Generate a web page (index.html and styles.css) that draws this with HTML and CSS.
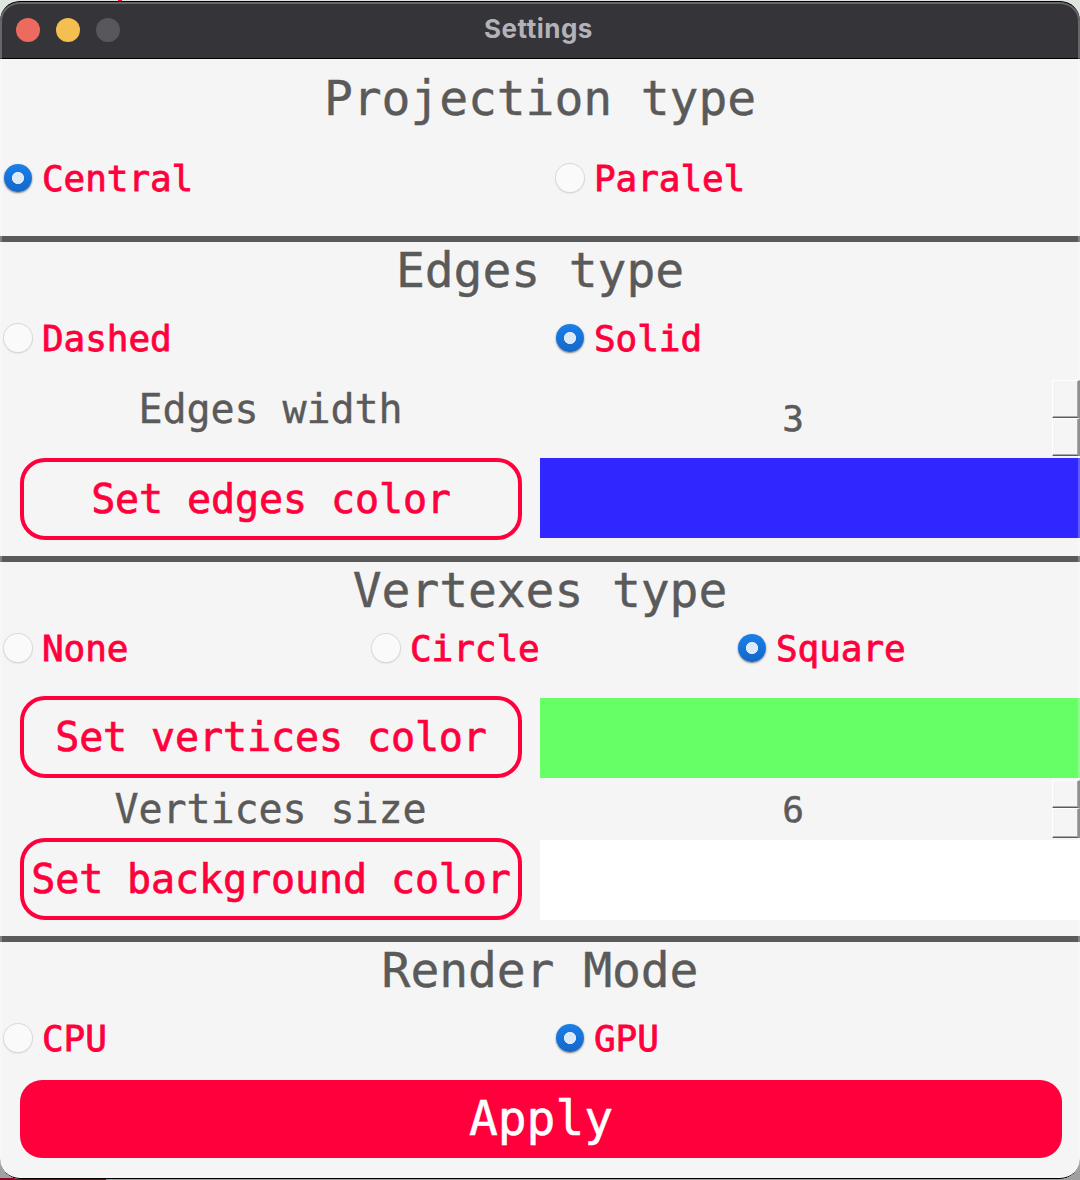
FILE: index.html
```html
<!DOCTYPE html>
<html lang="en">
<head>
<meta charset="utf-8">
<title>Settings</title>
<link rel="stylesheet" href="styles.css">
</head>
<body>
<div class="desktop">
<main class="window">
  <header class="titlebar">
    <div class="lights"><i class="light close"></i><i class="light minimize"></i><i class="light zoom"></i></div>
    <span class="caption">Settings</span>
  </header>

  <section class="section projection">
    <h2>Projection type</h2>
    <div class="options two">
      <label class="option"><i class="radio on"></i><span>Central</span></label>
      <label class="option"><i class="radio"></i><span>Paralel</span></label>
    </div>
  </section>

  <section class="section edges">
    <h2>Edges type</h2>
    <div class="options two">
      <label class="option"><i class="radio"></i><span>Dashed</span></label>
      <label class="option"><i class="radio on"></i><span>Solid</span></label>
    </div>
    <div class="row size-row tall">
      <span class="name">Edges width</span>
      <div class="spin"><span class="value">3</span><div class="steps"><i></i><i></i></div></div>
    </div>
    <div class="row">
      <button class="outline">Set edges color</button>
      <div class="swatch blue"></div>
    </div>
  </section>

  <section class="section vertices">
    <h2>Vertexes type</h2>
    <div class="options three">
      <label class="option"><i class="radio"></i><span>None</span></label>
      <label class="option"><i class="radio"></i><span>Circle</span></label>
      <label class="option"><i class="radio on"></i><span>Square</span></label>
    </div>
    <div class="row">
      <button class="outline">Set vertices color</button>
      <div class="swatch green low"></div>
    </div>
    <div class="row size-row">
      <span class="name">Vertices size</span>
      <div class="spin"><span class="value">6</span><div class="steps"><i></i><i></i></div></div>
    </div>
    <div class="row">
      <button class="outline">Set background color</button>
      <div class="swatch white low"></div>
    </div>
  </section>

  <section class="section render">
    <h2>Render Mode</h2>
    <div class="options two">
      <label class="option"><i class="radio"></i><span>CPU</span></label>
      <label class="option"><i class="radio on"></i><span>GPU</span></label>
    </div>
    <button class="apply"><span>Apply</span></button>
  </section>
</main>
</div>
</body>
</html>
```
FILE: styles.css
```css
* { box-sizing: border-box; }

body {
  margin: 0;
  font-family: "DejaVu Sans Mono", monospace;
  color: #5a5a5a;
}

.desktop {
  position: relative;
  width: 1080px;
  height: 1180px;
  padding: 1px 0;
  overflow: hidden;
  background:
    linear-gradient(#ff003c, #ff003c) 118px 0 / 4px 1px no-repeat,
    linear-gradient(#8a0624, #8a0624) 0 1178px / 106px 2px no-repeat,
    linear-gradient(#dfe6df 0, #dfe6df 50%, #a0a0a0 50%);
}

.window {
  position: relative;
  height: 1178px;
  border-radius: 20px;
  overflow: hidden;
  background: #f5f5f5;
}

/* dark outline and light inner rim drawn over the window content */
.window::after {
  content: "";
  position: absolute;
  inset: 0;
  border-radius: 20px;
  border: solid #000;
  border-width: 1px 0;
  box-shadow: inset 0 0 0 2px rgba(255, 255, 255, 0.25);
  pointer-events: none;
}

.titlebar {
  display: grid;
  grid-template-columns: 1fr auto 1fr;
  align-items: center;
  height: 58px;
  padding: 0 19px 0 16px;
  background: #353439;
  border-bottom: 1px solid #000;
}

.lights { display: flex; gap: 16px; }
.light { width: 24px; height: 24px; border-radius: 50%; }
.close { background: #ec6a5e; }
.minimize { background: #f4bf50; }
.zoom { background: #58575c; }

.caption {
  font: 700 26px/56px Inter, sans-serif;
  letter-spacing: 0.5px;
  color: #b3b2b6;
  transform: translateY(-1px);
}

.section { border-bottom: 6px solid #5a5a5a; }

h2 {
  margin: 0;
  height: 58px;
  font-size: 48px;
  font-weight: 400;
  line-height: 57px;
  letter-spacing: -0.1px;
  text-align: center;
  -webkit-text-stroke: 0.4px currentColor;
}

.projection { height: 183px; }
.projection h2 { height: 79px; line-height: 78px; }
.edges { height: 320px; }
.vertices { height: 380px; }
.render { border-bottom: 0; }

.options { display: grid; height: 76px; padding-left: 4px; color: #ff003c; }
.projection .options { height: 80px; }
.two { grid-template-columns: 552px 1fr; }
.three { grid-template-columns: 368px 366px 1fr; height: 56px; margin-bottom: 20px; }

.option {
  display: flex;
  align-items: center;
  gap: 10px;
  font-size: 36px;
  line-height: 40px;
  letter-spacing: -0.07px;
  -webkit-text-stroke: 0.8px currentColor;
}

.option span { padding-top: 2px; }

.radio {
  width: 28px;
  height: 28px;
  border-radius: 50%;
  background: #fafafa;
  box-shadow: 0 0 0 1px #dadada, 0 1px 2px rgba(0, 0, 0, 0.2);
}

.radio.on {
  background: radial-gradient(circle, #dce9f8 5.7px, transparent 6.4px), linear-gradient(#1a80e8, #1567c8);
  box-shadow: 0 1px 2px rgba(0, 0, 0, 0.5);
}

.row { display: grid; grid-template-columns: 540px 540px; height: 82px; }

.outline {
  width: 502px;
  height: 82px;
  margin-left: 20px;
  padding: 0;
  border: 4px solid #ff003c;
  border-radius: 25px;
  background: none;
  color: #ff003c;
  font: 400 40px "DejaVu Sans Mono", monospace;
  letter-spacing: -0.1px;
  white-space: nowrap;
  -webkit-text-stroke: 0.7px currentColor;
}

.swatch { height: 80px; }
.low { margin-top: 2px; }
.blue { background: #3026ff; }
.green { background: #66ff66; }
.white { background: #fff; }

.size-row { height: 60px; }
.size-row.tall { height: 82px; }

.name {
  padding-left: 1px;
  font-size: 40px;
  line-height: 62px;
  letter-spacing: -0.08px;
  text-align: center;
  -webkit-text-stroke: 0.4px currentColor;
}

.tall .name { line-height: 67px; }

.spin { display: flex; padding-top: 2px; }

.value {
  flex: 1;
  padding-right: 6px;
  text-align: center;
  font-size: 36px;
  line-height: 60px;
  -webkit-text-stroke: 0.5px currentColor;
}

.tall .spin { padding-top: 4px; }
.tall .value { line-height: 77px; }

.steps { display: flex; flex-direction: column; width: 28px; height: 58px; }
.tall .steps { height: 76px; }

.steps i {
  flex: 1;
  border-style: solid;
  border-width: 1px 2px 1px 1px;
  border-color: #fff #6a6a6a #5a5a5a #fff;
  box-shadow: inset -1px -1px #aaa;
}

.steps i:first-child { flex: none; height: 28px; }
.tall .steps i:first-child { height: 38px; }

.apply {
  display: block;
  width: 1042px;
  height: 78px;
  margin: 4px 0 0 20px;
  padding: 0 0 2px;
  border: 0;
  border-radius: 22px;
  background: #ff003c;
  color: #fff;
  font: 400 48px/76px "DejaVu Sans Mono", monospace;
  letter-spacing: -0.1px;
  -webkit-text-stroke: 0.5px currentColor;
}
```
